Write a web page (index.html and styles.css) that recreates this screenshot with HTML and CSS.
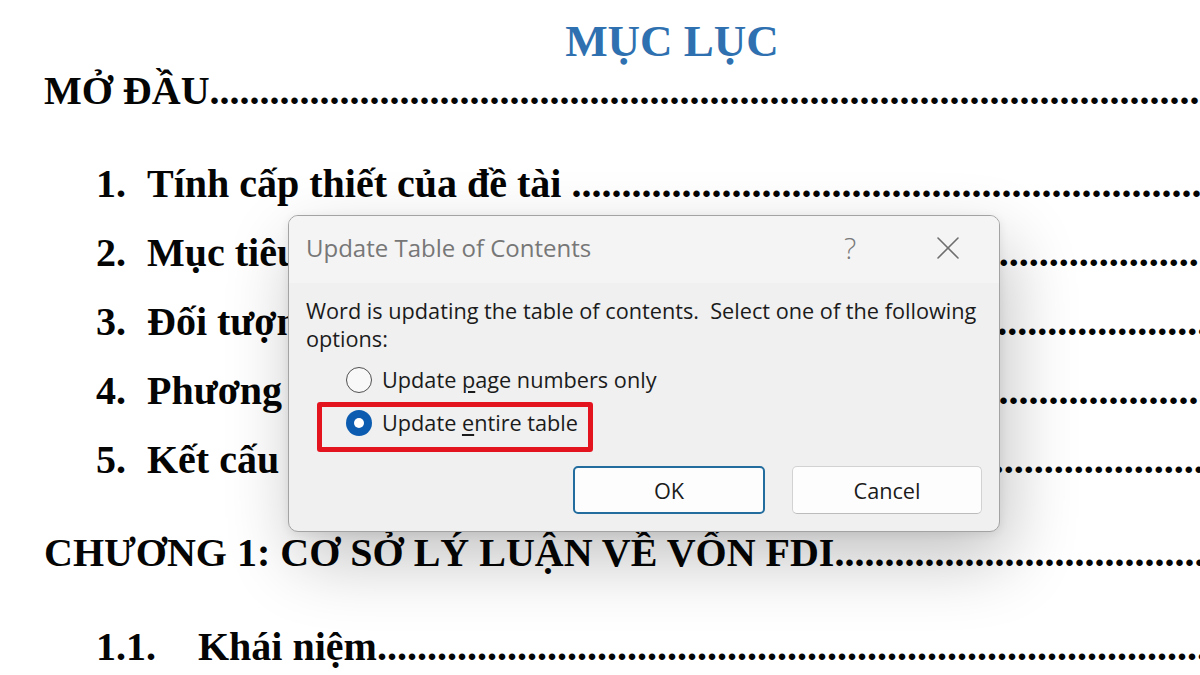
FILE: index.html
```html
<!DOCTYPE html>
<html lang="vi">
<head>
<meta charset="utf-8">
<title>Mục lục</title>
<link rel="stylesheet" href="styles.css">
</head>
<body>
<div class="doc">
  <div class="title">MỤC LỤC</div>
  <div class="row h1 first"><span class="label">MỞ ĐẦU</span><span class="leader">........................................................................................................................</span></div>
  <div class="row item i1"><span class="label"><span class="num">1.</span>Tính cấp thiết của đề tài&nbsp;</span><span class="leader">........................................................................................................................</span></div>
  <div class="row item"><span class="label"><span class="num">2.</span>Mục tiêu nghiên cứu&nbsp;</span><span class="leader">........................................................................................................................</span></div>
  <div class="row item"><span class="label"><span class="num">3.</span>Đối tượng và phạm vi nghiên cứu&nbsp;</span><span class="leader">........................................................................................................................</span></div>
  <div class="row item"><span class="label"><span class="num">4.</span>Phương pháp nghiên cứu&nbsp;</span><span class="leader">........................................................................................................................</span></div>
  <div class="row item"><span class="label"><span class="num">5.</span>Kết cấu của đề tài&nbsp;</span><span class="leader">........................................................................................................................</span></div>
  <div class="row h1 chap"><span class="label">CHƯƠNG 1: CƠ SỞ LÝ LUẬN VỀ VỐN FDI</span><span class="leader">........................................................................................................................</span></div>
  <div class="row item sub"><span class="label"><span class="num wide">1.1.</span>Khái niệm</span><span class="leader">........................................................................................................................</span></div>
</div>

<div class="dialog">
  <div class="dlg-titlebar">
    <div class="dlg-title">Update Table of Contents</div>
    <div class="tb-btn help">?</div>
    <div class="tb-btn close">
      <svg width="22" height="22" viewBox="0 0 22 22"><path d="M1 1 L21 21 M21 1 L1 21" stroke="#6e6e6e" stroke-width="1.6" fill="none" stroke-linecap="round"/></svg>
    </div>
  </div>
  <div class="dlg-body">
    <p class="dlg-msg">Word is updating the table of contents.&nbsp; Select one of the following options:</p>
    <div class="options">
      <div class="opt"><span class="radio"></span><span class="opt-label">Update <u>p</u>age numbers only</span></div>
      <div class="opt"><span class="radio checked"></span><span class="opt-label">Update <u>e</u>ntire table</span></div>
    </div>
    <div class="buttons">
      <button class="btn ok">OK</button>
      <button class="btn cancel">Cancel</button>
    </div>
  </div>
  <div class="highlight"></div>
</div>
</body>
</html>
```

FILE: styles.css
```css
html, body {
  margin: 0;
  padding: 0;
}
body {
  width: 1200px;
  height: 675px;
  overflow: hidden;
  background: #ffffff;
  position: relative;
}

/* Document */
.doc {
  font-family: "Liberation Serif", "Times New Roman", serif;
  font-weight: bold;
  font-size: 40px;
  color: #050505;
}
.title {
  font-size: 45px;
  line-height: 50px;
  padding-top: 16px;
  padding-left: 144px;
  text-align: center;
  color: #2f71b0;
}
.row {
  display: flex;
  white-space: nowrap;
  line-height: 69px;
  padding-left: 96px;
}
.row.h1 {
  padding-left: 44px;
}
.row.first {
  line-height: 50px;
}
.row.i1 {
  margin-top: 33px;
}
.row.chap {
  margin-top: 24px;
}
.row.sub {
  margin-top: 25px;
}
.label {
  flex: none;
}
.num {
  display: inline-block;
  width: 51px;
}
.num.wide {
  width: 102px;
}
.leader {
  flex: 1;
  min-width: 0;
  overflow: hidden;
}

/* Dialog */
.dialog {
  position: absolute;
  left: 288px;
  top: 215px;
  width: 712px;
  height: 317px;
  box-sizing: border-box;
  border: 1px solid #a3a3a3;
  border-radius: 10px;
  background: #f0f0f0;
  box-shadow: 8px 28px 70px rgba(0, 0, 0, 0.24), 0 2px 10px rgba(0, 0, 0, 0.08);
  font-family: "Open Sans", "Noto Sans", sans-serif;
  color: #1b1b1b;
  display: flex;
  flex-direction: column;
  overflow: hidden;
}
.dlg-titlebar {
  height: 67px;
  box-sizing: border-box;
  display: flex;
  align-items: center;
  padding: 0 28px 4px 17px;
  background: #f4f4f4;
}
.dlg-title {
  flex: 1;
  font-size: 24px;
  color: #777777;
  white-space: nowrap;
}
.tb-btn {
  width: 46px;
  height: 46px;
  display: flex;
  align-items: center;
  justify-content: center;
  color: #7a7a7a;
}
.help {
  font-size: 29px;
  font-weight: 300;
}
.close {
  margin-left: 52px;
}
.dlg-body {
  padding: 0 17px 17px;
  display: flex;
  flex-direction: column;
}
.dlg-msg {
  margin: 14px 0 0;
  font-size: 21.7px;
  line-height: 28px;
}
.options {
  margin-top: 5px;
  padding-left: 40px;
}
.opt {
  height: 43px;
  display: flex;
  align-items: center;
}
.opt-label {
  font-size: 21.7px;
  line-height: 28px;
  margin-left: 10px;
  white-space: nowrap;
}
.opt-label u {
  text-underline-offset: 3px;
}
.radio {
  width: 26px;
  height: 26px;
  box-sizing: border-box;
  border-radius: 50%;
  border: 1.6px solid #505050;
  background: #f8f8f8;
  display: flex;
  align-items: center;
  justify-content: center;
}
.radio.checked {
  border: none;
  background: #0b5cb0;
}
.radio.checked::after {
  content: "";
  width: 10px;
  height: 10px;
  border-radius: 50%;
  background: #ffffff;
}
.buttons {
  margin-top: 22px;
  display: flex;
  justify-content: flex-end;
  gap: 27px;
}
.btn {
  height: 48px;
  box-sizing: border-box;
  border-radius: 5px;
  background: #fdfdfd;
  font-family: "Open Sans", "Noto Sans", sans-serif;
  font-size: 21.7px;
  color: #1b1b1b;
  padding: 0;
}
.btn.ok {
  width: 192px;
  border: 2px solid #236d9e;
}
.btn.cancel {
  width: 190px;
  border: 1px solid #d2d2d2;
  border-bottom-color: #bcbcbc;
}
.highlight {
  position: absolute;
  left: 28px;
  top: 186px;
  width: 276px;
  height: 50px;
  box-sizing: border-box;
  border: 5px solid #e3141d;
  border-radius: 3px;
}
```
